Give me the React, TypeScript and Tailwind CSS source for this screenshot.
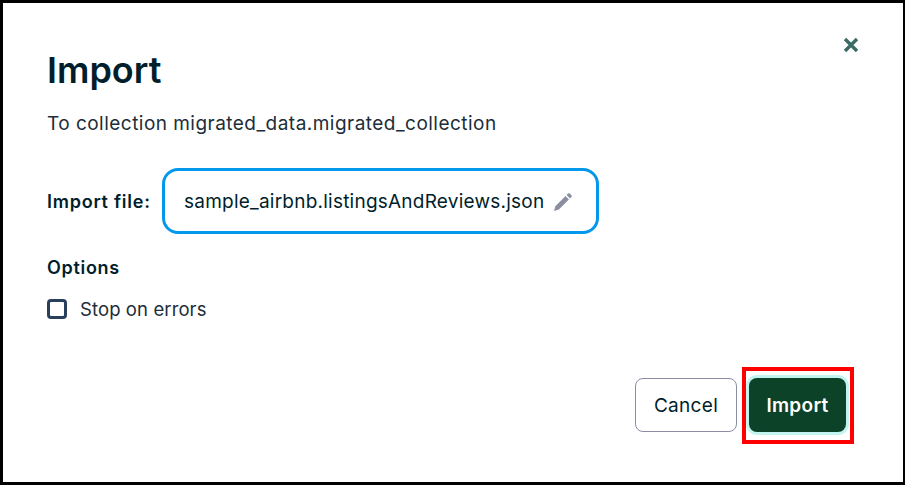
const font = { fontFamily: 'Inter, "Noto Sans", sans-serif' };

export default function App() {
  return (
    <div style={font} className="w-[905px] h-[485px] bg-white border-[3px] border-r-2 border-black flex flex-col relative text-[#001e2b] overflow-hidden">
      <button className="absolute top-[34px] right-[44px] w-4 h-4 text-[#3d6b66] flex items-center justify-center">
        <svg width="16" height="16" viewBox="0 0 16 16" fill="none" stroke="currentColor" strokeWidth="3.4">
          <path d="M2 2 L14 14 M14 2 L2 14" />
        </svg>
      </button>

      <div className="pl-[44px] pt-[44px] flex-1">
        <h1 className="text-[36px] leading-[46px] font-semibold text-[#001e2b]">Import</h1>
        <p className="text-[19px] tracking-[0.47px] leading-[24px] mt-[19px] text-[#1c2d38]">To collection migrated_data.migrated_collection</p>

        <div className="flex items-center mt-[32px]">
          <label className="text-[18px] tracking-[0.75px] font-semibold w-[115px] whitespace-nowrap">Import file:</label>
          <div className="w-[437px] h-[66px] rounded-[16px] border-[3px] border-[#0498ec] flex items-center pl-[19px] pt-[2px] gap-[8px]">
            <span className="text-[19px] tracking-[0.23px] whitespace-nowrap">sample_airbnb.listingsAndReviews.json</span>
            <svg width="22" height="22" viewBox="0 0 16 16" className="text-[#8a8fa0]" fill="currentColor">
              <path d="M11.6 1.9a1 1 0 0 1 1.4 0l1.1 1.1a1 1 0 0 1 0 1.4l-1 1-2.5-2.5z" />
              <path d="M9.8 3.7l2.5 2.5-7.3 7.3-3.6 1.1 1.1-3.6z" />
            </svg>
          </div>
        </div>

        <div className="text-[18px] tracking-[0.7px] font-semibold leading-[24px] mt-[22px]">Options</div>
        <div className="flex items-center mt-[17px]">
          <span className="w-[20px] h-[20px] rounded-[4px] border-[3px] border-[#28405c] bg-white" />
          <span className="text-[18.5px] tracking-[0.1px] leading-[24px] ml-[13px] text-[#1c2d38]">Stop on errors</span>
        </div>
      </div>

      <div className="flex justify-end items-start pr-[49px] pb-[38px] gap-[5px]">
        <button className="mt-[11px] w-[102px] h-[54px] pt-[2px] rounded-[8px] border border-[#8c8ca5] bg-white text-[19px] tracking-[0.3px]">Cancel</button>
        <div className="border-[4px] border-[#ff0000] w-[112px] h-[77px] pl-[3px] pt-[7px] flex items-start">
          <button className="w-[97px] h-[54px] pt-[2px] rounded-[8px] bg-[#0c4227] text-white text-[19px] tracking-[0.3px] font-semibold shadow-[0_0_0_3px_#c3f5f0]">Import</button>
        </div>
      </div>
    </div>
  );
}
